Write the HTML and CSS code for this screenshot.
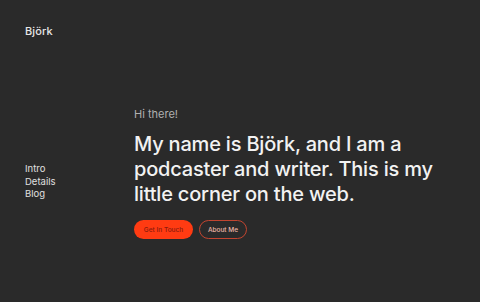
FILE: index.html
```html
<!DOCTYPE html>
<html>
<head>
<meta charset="utf-8">
<link rel="stylesheet" href="styles.css">
</head>
<body>
<div class="page">
  <header class="header"><span class="logo">Björk</span></header>
  <main class="main">
    <nav class="nav">
      <a>Intro</a>
      <a>Details</a>
      <a>Blog</a>
    </nav>
    <section class="hero">
      <p class="greet">Hi there!</p>
      <h1 class="title">My name is Björk, and I am a podcaster and writer. This is my little corner on the web.</h1>
      <div class="actions">
        <a class="btn btn-primary">Get In Touch</a>
        <a class="btn btn-outline">About Me</a>
      </div>
    </section>
  </main>
</div>
</body>
</html>
```
FILE: styles.css
```css
* { box-sizing: border-box; margin: 0; padding: 0; }
html, body { background: #2a2a2a; }
body { font-family: Inter, "Noto Sans", sans-serif; color: #eeeeee; }
.page { width: 480px; height: 302px; display: flex; flex-direction: column; }
.header { padding: 25px 25px 0; height: 60px; }
.logo { display: block; margin-top: -1px; font-size: 11px; font-weight: 500; color: #e6e6e6; letter-spacing: 0.1px; }
.main { display: flex; align-items: flex-start; padding-left: 25px; padding-top: 47px; }
.nav { width: 109px; display: flex; flex-direction: column; padding-top: 56px; }
.nav a { font-size: 9.5px; line-height: 12.5px; color: #e0e0e0; }
.hero { width: 320px; }
.greet { font-size: 11px; color: #b0b0b0; line-height: 14px; }
.title { font-size: 20px; font-weight: 500; line-height: 25px; margin-top: 11px; color: #f2f2f2; letter-spacing: -0.2px; }
.actions { display: flex; gap: 6px; margin-top: 13px; }
.btn { display: flex; align-items: center; justify-content: center; height: 19px; border-radius: 10px; font-size: 6.5px; font-weight: 500; }
.btn-primary { width: 59px; background: #ff3b12; color: #8a1a0c; }
.btn-outline { width: 48px; border: 1px solid #c24530; color: #f0b8a8; }
```
